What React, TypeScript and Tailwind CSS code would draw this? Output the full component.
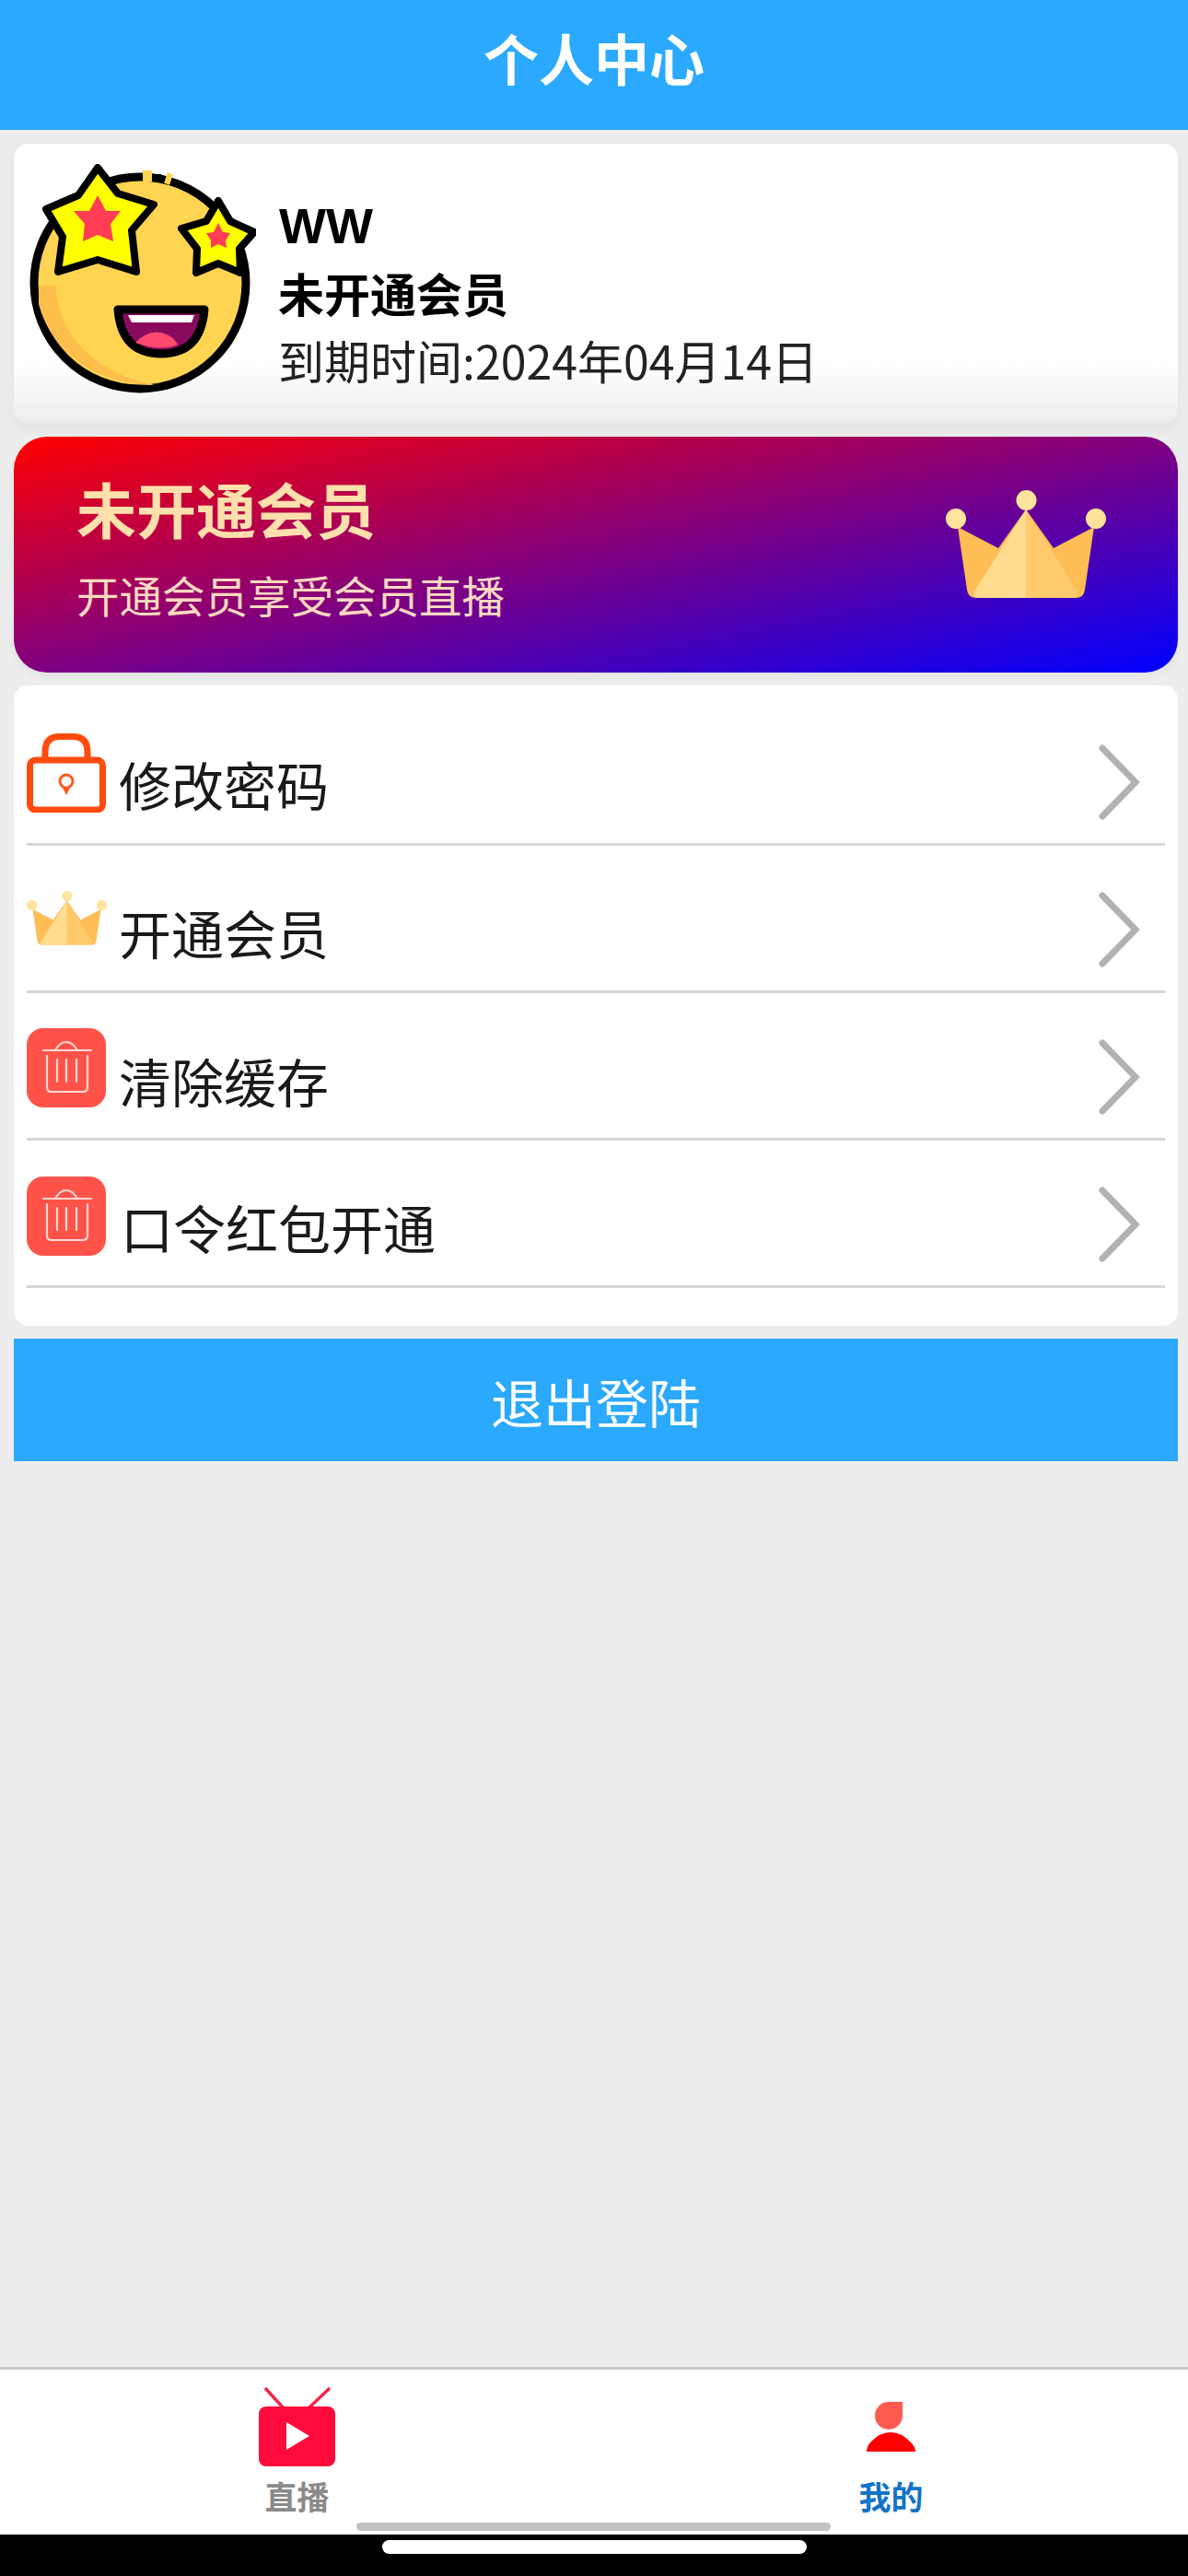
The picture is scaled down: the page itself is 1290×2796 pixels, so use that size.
const CJK = '"Noto Sans CJK SC", "Noto Sans", sans-serif';

function Avatar() {
  return (
    <svg viewBox="22 18 246 249" className="w-[246px] h-[249px] shrink-0">
      <circle cx="142" cy="147" r="115" fill="#ffd452" stroke="#000" strokeWidth="9" />
      <path d="M32 170 C48 230 105 258 158 258 C100 246 55 212 50 150 L32 150 Z" fill="#fdbe4b" />
      <path d="M145 31 L155 31 M170 33 L176 35" stroke="#ffd452" strokeWidth="12" />
      <circle cx="163" cy="33" r="4" fill="#000" />
      <path d="M96 22 L118 50 L157 62 L133 90 L138 135 L96 122 L53 135 L58 97 L40 67 L75 52 Z" fill="#ffff00" stroke="#000" strokeWidth="8" strokeLinejoin="round" />
      <path d="M96 52 L105 69 L121 69 L110 83 L113 102 L96 95 L80 102 L82 83 L70 69 L87 69 Z" fill="#ff3d55" />
      <path d="M227 58 L240 80 L266 92 L250 110 L251 136 L227 126 L203 136 L204 110 L187 88 L214 80 Z" fill="#ffff00" stroke="#000" strokeWidth="8" strokeLinejoin="round" />
      <path d="M227 82 L232 92 L240 93 L235 101 L236 109 L227 105 L219 109 L219 101 L214 93 L222 92 Z" fill="#ff3d55" />
      <path d="M118 176 H212 Q208 224 165 224 Q122 224 118 176 Z" fill="#8a0a5e" stroke="#000" strokeWidth="9" strokeLinejoin="round" />
      <path d="M129 182 H201 L198 190 H133 Z" fill="#fff" />
      <path d="M137 212 Q150 198 165 201 Q178 204 183 214 Q165 222 137 212 Z" fill="#ff4a70" />
    </svg>
  );
}

function Crown({ className }: { className: string }) {
  return (
    <svg viewBox="8 8 184 124" className={className}>
      <path d="M27 52 L71 75 L101 33 L131 75 L175 52 L165 120 Q164 129 155 129 L47 129 Q38 129 37 120 Z" fill="#ffbd55" />
      <path d="M101 33 L45 122 Q42 129 50 129 L101 129 Z" fill="#ffdc8f" />
      <path d="M101 33 L157 122 Q160 129 152 129 L101 129 Z" fill="#ffca6b" />
      <circle cx="101.5" cy="23" r="11" fill="#ffe39c" />
      <circle cx="25" cy="43" r="11" fill="#ffe39c" />
      <circle cx="177" cy="43" r="11" fill="#ffe39c" />
    </svg>
  );
}

function Lock() {
  return (
    <svg viewBox="0 0 86 86" className="w-[86px] h-[86px] shrink-0">
      <rect x="3.5" y="29" width="79" height="54" rx="6" fill="none" stroke="#ff4b0f" strokeWidth="7" />
      <path d="M20 29 V20 Q20 3.5 36 3.5 H50 Q66 3.5 66 20 V29" fill="none" stroke="#ff4b0f" strokeWidth="7" />
      <circle cx="43" cy="52" r="7" fill="none" stroke="#ff5a1e" strokeWidth="3" />
      <path d="M39 59 H47 L43 67 Z" fill="#ff5a1e" />
    </svg>
  );
}

function Trash() {
  return (
    <svg viewBox="0 0 86 86" className="w-[86px] h-[86px] shrink-0">
      <rect width="86" height="86" rx="18" fill="#ff5349" />
      <g fill="none" stroke="#ffd9d4" strokeWidth="2.2" strokeLinecap="round">
        <path d="M18 24 H70" />
        <path d="M31 24 Q36 15 43 15 Q50 15 55 24" />
        <path d="M22 30 V64 Q22 69 27 69 H61 Q66 69 66 64 V30" />
        <path d="M33 34 V58 M43 34 V58 M54 34 V58" />
      </g>
    </svg>
  );
}

function Chevron() {
  return (
    <svg viewBox="0 0 46 84" className="w-[46px] h-[84px] shrink-0">
      <path d="M5 5 L41 42 L5 79" fill="none" stroke="#b2b2b2" strokeWidth="7" strokeLinecap="round" strokeLinejoin="miter" />
    </svg>
  );
}

function Tv() {
  return (
    <svg viewBox="0 0 83 86" className="w-[83px] h-[86px]">
      <path d="M7 1 L27 23 M77 1 L54 23" stroke="#f3264b" strokeWidth="3.5" />
      <rect x="0" y="21" width="83" height="65" rx="8" fill="#ff0a3c" />
      <path d="M30 38 L55 53 L30 68 Z" fill="#fff" />
    </svg>
  );
}

function Person() {
  return (
    <svg viewBox="18 14 58 58" className="w-[58px] h-[58px]">
      <path d="M44 16 H59 V31 A15 15 0 1 1 44 16 Z" fill="#ff5a50" />
      <path d="M20 70 Q20 65 24 60 Q34 49 46 49 Q58 49 68 60 Q73 65 73 70 Z" fill="#ff0000" />
    </svg>
  );
}

const rows = [
  { icon: <Lock />, label: '修改密码', row: 'h-[174px]', iconPos: 'mt-[52px]', textPos: 'mt-[70px] ml-[14px]', chevPos: 'mt-[63px]' },
  { icon: <Crown className="w-[92px] h-[62px] shrink-0" />, label: '开通会员', row: 'h-[160px]', iconPos: 'mt-[47px] -ml-[3px] -mr-[3px]', textPos: 'mt-[57px] ml-[14px]', chevPos: 'mt-[49px]' },
  { icon: <Trash />, label: '清除缓存', row: 'h-[160px]', iconPos: 'mt-[38px]', textPos: 'mt-[58px] ml-[14px]', chevPos: 'mt-[49px]' },
  { icon: <Trash />, label: '口令红包开通', row: 'h-[160px]', iconPos: 'mt-[39px]', textPos: 'mt-[57px] ml-[16px]', chevPos: 'mt-[49px]' },
];

export default function App() {
  return (
    <div className="w-[1290px] h-[2796px] flex flex-col bg-[#ededed] relative overflow-hidden" style={{ fontFamily: CJK }}>
      <header className="h-[141px] shrink-0 bg-[#2ba9ff] flex items-center justify-center">
        <h1 className="text-[60px] leading-[64px] font-bold text-white -mt-[18px]">个人中心</h1>
      </header>

      <main className="flex-1 flex flex-col pl-[15px] pr-[11px] pt-[15px] gap-[14px]">
        <section className="h-[304px] rounded-[16px] flex items-start pl-[17px] pt-[22px] gap-[24px] shadow-[0_6px_14px_rgba(0,0,0,0.05)] bg-[linear-gradient(to_bottom,#ffffff_0%,#ffffff_78%,#ececec_100%)]">
          <Avatar />
          <div className="flex flex-col pt-[37px] text-black">
            <div className="text-[54px] leading-[60px] font-bold ml-[1px]" style={{ fontFamily: '"Liberation Sans", sans-serif' }}>WW</div>
            <div className="text-[50px] leading-[60px] font-bold mt-[12px]">未开通会员</div>
            <div className="text-[50px] leading-[60px] mt-[13px] text-[#222]">到期时间:2024年04月14日</div>
          </div>
        </section>

        <section className="h-[256px] rounded-[36px] flex items-start justify-between pl-[68px] pr-[80px] shadow-[0_4px_12px_rgba(0,0,0,0.05)] bg-[linear-gradient(to_bottom_right,#ff0000,#0000ff)]">
          <div className="flex flex-col">
            <div className="text-[65px] leading-[72px] font-bold text-[#ffe0ad] mt-[41px]">未开通会员</div>
            <div className="text-[46.5px] leading-[56px] text-[#ffd9c0] mt-[30px]">开通会员享受会员直播</div>
          </div>
          <Crown className="w-[184px] h-[124px] mt-[54px] -mr-[6px]" />
        </section>

        <section className="h-[695px] rounded-[16px] bg-white px-[14px] flex flex-col">
          {rows.map((r) => (
            <div key={r.label} className={`${r.row} shrink-0 flex items-start border-b-[3px] border-[#d6d6d6]`}>
              <div className={r.iconPos}>{r.icon}</div>
              <div className={`text-[57px] leading-[72px] text-[#1a1a1a] flex-1 ${r.textPos}`}>{r.label}</div>
              <div className={`${r.chevPos} mr-[27px]`}><Chevron /></div>
            </div>
          ))}
        </section>

        <button className="h-[133px] bg-[#2ba9ff] text-white text-[57px] leading-[72px] flex items-center justify-center">退出登陆</button>
      </main>

      <nav className="h-[182px] shrink-0 bg-white border-t-[3px] border-[#c9c9c9] grid grid-cols-2">
        <div className="flex flex-col items-center pt-[19px]">
          <div className="h-[86px] flex items-end"><Tv /></div>
          <div className="text-[35px] leading-[40px] font-bold text-[#8a8a8a] mt-[12px]">直播</div>
        </div>
        <div className="flex flex-col items-center pt-[19px]">
          <div className="h-[86px] flex items-center"><Person /></div>
          <div className="text-[35px] leading-[40px] font-bold text-[#1473c8] mt-[12px]">我的</div>
        </div>
      </nav>
      <div className="absolute left-[387px] top-[2738px] w-[515px] h-[9px] rounded-full bg-[#c2c2c2]" />
      <footer className="h-[45px] shrink-0 bg-black flex justify-center pt-[6px]">
        <div className="w-[461px] h-[15px] rounded-full bg-white" />
      </footer>
    </div>
  );
}
